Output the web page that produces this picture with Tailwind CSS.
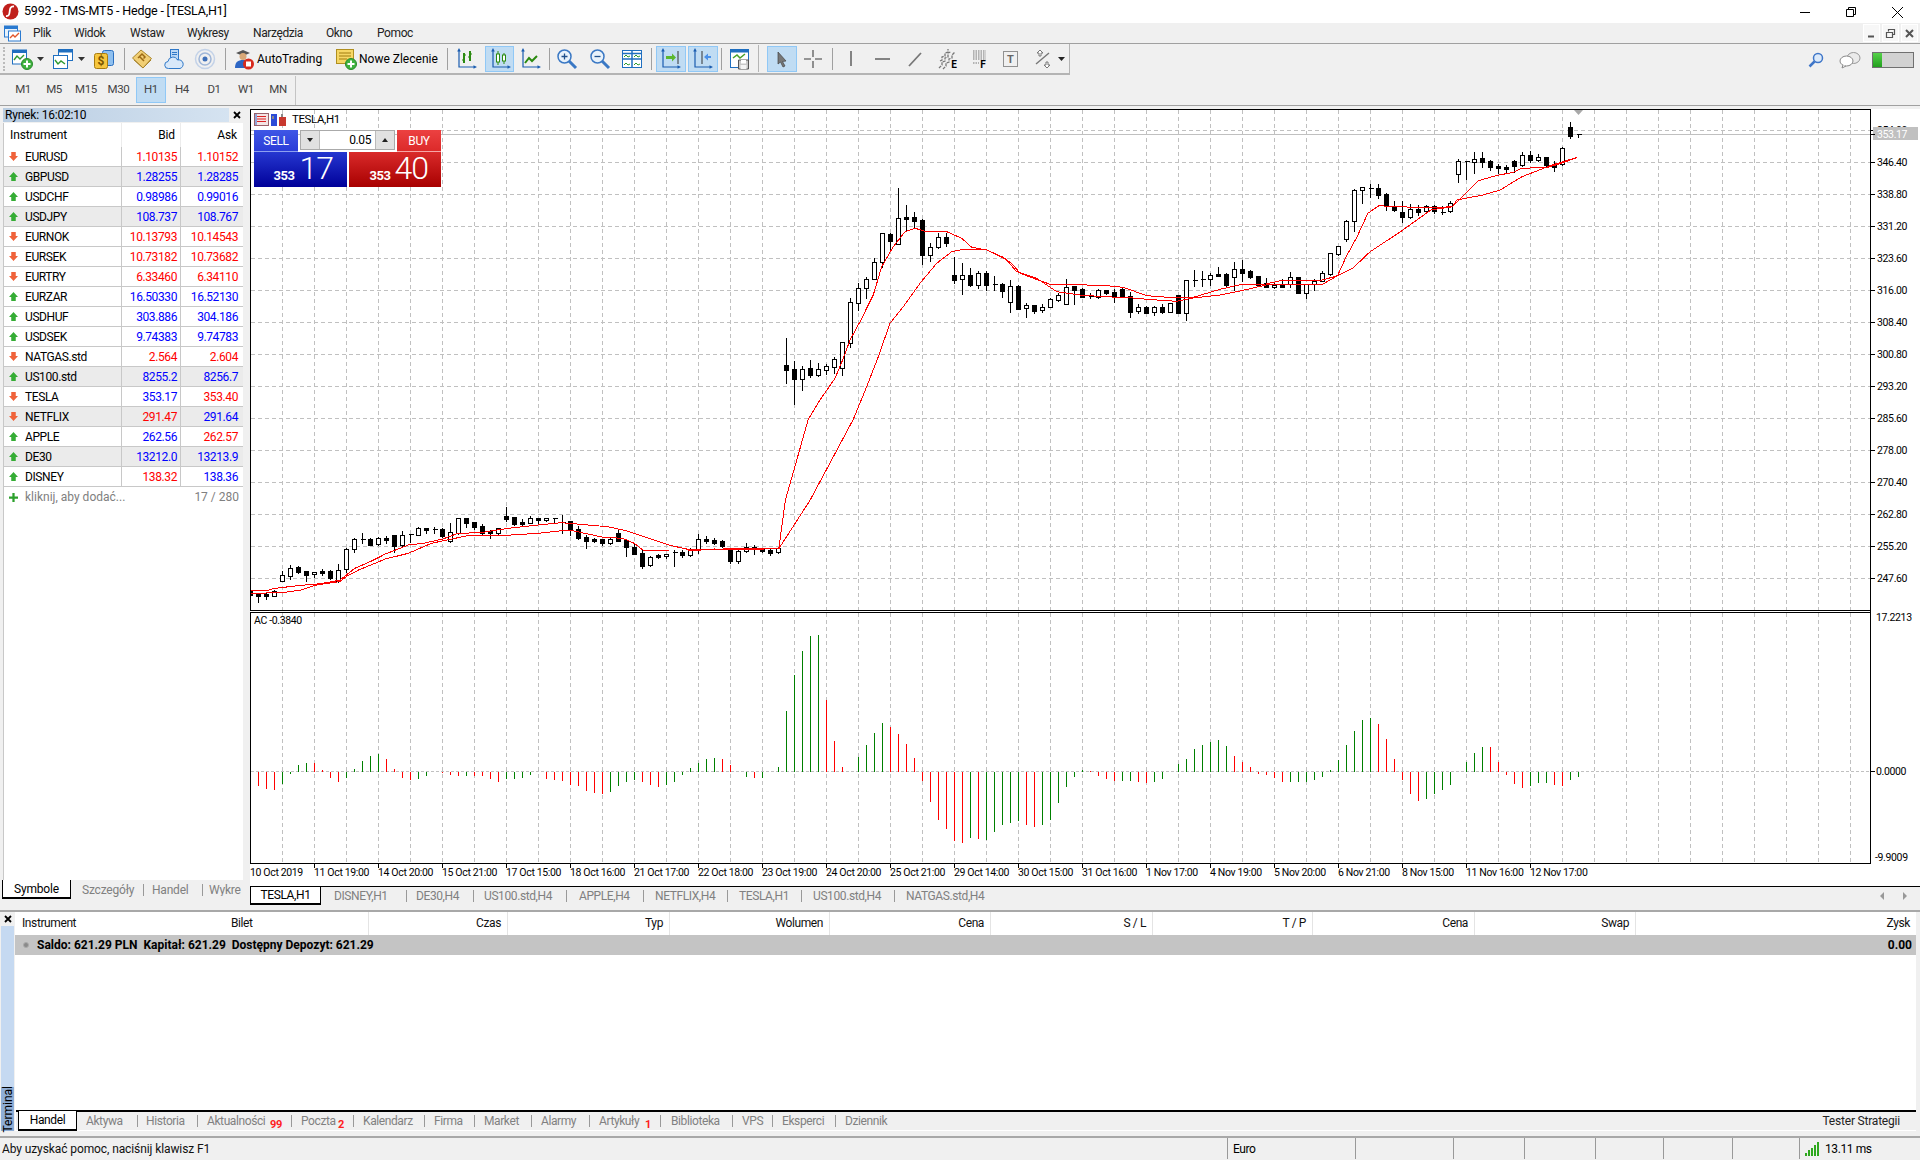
<!DOCTYPE html>
<html lang="pl">
<head>
    <meta charset="UTF-8">
    <title>5992 - TMS-MT5 - Hedge - [TESLA,H1]</title>
    <script src="https://cdn.jsdelivr.net/npm/@tailwindcss/browser@4"></script>
</head>
<body class="w-[1920px] h-[1160px] overflow-hidden bg-[#f0f0f0] text-black text-[11.5px] leading-none tracking-[-0.4px] font-['Roboto',sans-serif]">

    <svg class="hidden">
        <symbol id="up" viewBox="0 0 8 8"><path d="M4 0l4 4.500H6V8H2V4.500H0z" fill="#35ad35"/></symbol>
        <symbol id="down" viewBox="0 0 8 8"><path d="M2 0h4v3.500h2L4 8 0 3.500h2z" fill="#f0623a"/></symbol>
        <symbol id="axes" viewBox="0 0 22 22"><path d="M4 3v16h15" fill="none" stroke="#1a5cb0" stroke-width="1.200"/><path d="M4 0l-1.800 3.500h3.600zM22 19l-3.500-1.800v3.600z" fill="#1a5cb0"/></symbol>
        <symbol id="plus" viewBox="0 0 22 22"><circle cx="16" cy="16" r="5.500" fill="#3eb23e" stroke="#2a8a2a"/><path d="M16 12.500v7M12.500 16h7" stroke="#fff" stroke-width="2"/></symbol>
    </svg>

    <!-- pasek tytulu -->
    <div class="h-[23px] bg-white flex items-center">
        <svg class="ml-[2px] w-[17px] h-[17px]" viewBox="0 0 17 17"><circle cx="8.500" cy="8.500" r="8" fill="#c0201c"/><path d="M12 3.500C8 3 8 6 7.700 8.500S7 13.500 4 13" fill="none" stroke="#fff" stroke-width="1.800"/></svg>
        <span class="ml-[5px] text-[12.5px] tracking-[-0.2px]">5992 - TMS-MT5 - Hedge - [TESLA,H1]</span>
        <div class="ml-auto flex items-center">
            <svg class="w-[46px] h-[20px]" viewBox="0 0 46 20"><path d="M18 10.500h10" stroke="#000"/></svg>
            <svg class="w-[46px] h-[20px]" viewBox="0 0 46 20"><path d="M18.500 7.500h7v7h-7zM20.500 7.500v-2h7v7h-2" fill="none" stroke="#000"/></svg>
            <svg class="w-[46px] h-[20px]" viewBox="0 0 46 20"><path d="M18 5l11 11M29 5L18 16" stroke="#000"/></svg>
        </div>
    </div>

    <!-- menu -->
    <div class="h-[21px] border-b border-[#a0a0a0] flex items-center text-[12px] text-[#222] relative">
        <svg class="ml-[4px] w-[17px] h-[17px]" viewBox="0 0 17 17"><rect x="0.500" y="1" width="13" height="11" fill="#e8f2fb" stroke="#2a7ad0"/><rect x="0.500" y="1" width="13" height="3" fill="#2a7ad0"/><rect x="4.500" y="6" width="12" height="10" fill="#fff" stroke="#2a7ad0"/><path d="M6 13l3-3 2 2 4-4" fill="none" stroke="#e0552a" stroke-width="1.300"/></svg>
        <span class="ml-[12px] w-[41px]">Plik</span>
        <span class="w-[56px]">Widok</span>
        <span class="w-[57px]">Wstaw</span>
        <span class="w-[66px]">Wykresy</span>
        <span class="w-[73px]">Narzędzia</span>
        <span class="w-[51px]">Okno</span>
        <span>Pomoc</span>
        <div class="ml-auto mr-[2px] flex gap-[2px] items-center">
            <div class="w-[17px] h-[18px] bg-[#f7f7f7] border border-white flex items-center justify-center"><svg class="w-[11px] h-[11px]" viewBox="0 0 11 11"><path d="M2 8.500h6" stroke="#555" stroke-width="2"/></svg></div>
            <div class="w-[17px] h-[18px] bg-[#f7f7f7] border border-white flex items-center justify-center"><svg class="w-[11px] h-[11px]" viewBox="0 0 11 11"><path d="M1.500 4.500h6v5h-6zM3.500 3.500v-2h6v5h-2" fill="none" stroke="#555" stroke-width="1.200"/></svg></div>
            <div class="w-[17px] h-[18px] bg-[#f7f7f7] border border-white flex items-center justify-center"><svg class="w-[11px] h-[11px]" viewBox="0 0 11 11"><path d="M2 2l7 7M9 2L2 9" stroke="#555" stroke-width="2"/></svg></div>
        </div>
    </div>

    <!-- pasek narzedzi -->
    <div class="h-[31px] flex items-center relative">
        <div class="w-[1070px] h-[31px] border-b-2 border-r border-[#b4b4b4] flex items-center pl-[3px] text-[12px] tracking-normal">
            <div class="w-[2px] h-[24px] border-l-2 border-dotted border-[#bbb]"></div>
            <svg class="ml-[6px] w-[22px] h-[22px]" viewBox="0 0 22 22"><rect x="1.500" y="2" width="14" height="14" fill="#fff" stroke="#1f6fc0"/><rect x="1.500" y="2" width="14" height="3" fill="#1f6fc0"/><path d="M3 12l3-4 3 3 4-4" fill="none" stroke="#2f9a2f" stroke-width="1.400"/><use href="#plus"/></svg>
            <svg class="ml-[4px] w-[7px] h-[4px]" viewBox="0 0 7 4"><path d="M0 0h7L3.500 4z" fill="#333"/></svg>
            <svg class="ml-[8px] w-[22px] h-[22px]" viewBox="0 0 22 22"><rect x="6.500" y="1.500" width="14" height="11" fill="#fff" stroke="#1f6fc0"/><rect x="6.500" y="1.500" width="14" height="3" fill="#1f6fc0"/><rect x="1.500" y="7.500" width="14" height="13" fill="#fff" stroke="#1f6fc0"/><path d="M3 12l3 4 3-3 4 3" fill="none" stroke="#2f9a2f" stroke-width="1.400"/></svg>
            <svg class="ml-[4px] w-[7px] h-[4px]" viewBox="0 0 7 4"><path d="M0 0h7L3.500 4z" fill="#333"/></svg>
            <svg class="ml-[8px] w-[22px] h-[22px]" viewBox="0 0 22 22"><rect x="9.500" y="2.500" width="11" height="15" rx="2" fill="#8fc0ef" stroke="#2a6fc0"/><rect x="1.500" y="5.500" width="13" height="15" rx="2" fill="#f6c63e" stroke="#a87c10"/><text x="8" y="17" font-size="12" font-weight="700" text-anchor="middle" fill="#7a5500">$</text></svg>
            <div class="ml-[9px] w-px h-[22px] bg-[#a0a0a0]"></div>
            <svg class="ml-[6px] w-[22px] h-[22px]" viewBox="0 0 22 22"><path d="M1.500 10L10 2l10.500 8.500L12 20z" fill="#f1cf75" stroke="#a9852b"/><path d="M3 12l9 8 8-8" fill="none" stroke="#a9852b"/><path d="M7 10l4-4 3 3-1.500 1.500M8 8l5 5" fill="none" stroke="#9c6a14" stroke-width="1.500"/></svg>
            <svg class="ml-[10px] w-[22px] h-[22px]" viewBox="0 0 22 22"><rect x="7.500" y="1.500" width="8" height="10" fill="#bcd8f5" stroke="#2f78c8"/><path d="M9 4.500h5M9 6.500h5" stroke="#2f78c8"/><path d="M5.500 20.500a3.500 3.500 0 0 1-.5-7 5 5 0 0 1 9.500-1.500 4.300 4.300 0 0 1 2.500 8.500z" fill="#d8e8f9" stroke="#2f78c8"/></svg>
            <svg class="ml-[9px] w-[22px] h-[22px]" viewBox="0 0 22 22" fill="none"><circle cx="11" cy="11" r="9.500" stroke="#c3d2e8" stroke-width="1.500"/><circle cx="11" cy="11" r="6" stroke="#9fb6d8" stroke-width="1.500"/><circle cx="11" cy="11" r="2.500" fill="#3e6fb8"/></svg>
            <div class="ml-[9px] w-px h-[22px] bg-[#a0a0a0]"></div>
            <svg class="ml-[7px] w-[22px] h-[22px]" viewBox="0 0 22 22"><path d="M3 5l7-3 7 3-7 3z" fill="#555"/><circle cx="10" cy="8.500" r="3.500" fill="#d9a877"/><path d="M2 20c0-6 3-8 8-8s8 2 8 8z" fill="#2d66c4"/><circle cx="15.500" cy="16" r="5.500" fill="#d72a1e"/><rect x="13" y="13.500" width="5" height="5" fill="#fff"/></svg>
            <span class="ml-[2px] w-[65px] whitespace-nowrap">AutoTrading</span>
            <svg class="ml-[13px] w-[22px] h-[22px]" viewBox="0 0 22 22"><rect x="1.500" y="1.500" width="17" height="14" fill="#f6d765" stroke="#b08f20"/><path d="M4 5h12M4 8h12M4 11h8" stroke="#a07c10"/><use href="#plus"/></svg>
            <span class="ml-[2px] w-[78px] whitespace-nowrap">Nowe Zlecenie</span>
            <div class="ml-[10px] w-px h-[22px] bg-[#a0a0a0]"></div>
            <svg class="ml-[7px] w-[22px] h-[22px]" viewBox="0 0 22 22"><use href="#axes"/><path d="M9 5v10M7.500 12H9M9 7h1.500M15 3v10M13.500 9H15M15 6h1.500" stroke="#2a8a10" stroke-width="2" fill="none"/></svg>
            <div class="ml-[8px] w-[29px] h-[26px] bg-[#c0dcf3] border border-[#90c8f6] flex items-center justify-center"><svg class="w-[22px] h-[22px]" viewBox="0 0 22 22"><use href="#axes"/><path d="M9 3v14M15 5v11" stroke="#2a8a10"/><rect x="7.500" y="6" width="3" height="8" fill="#fff" stroke="#2a8a10"/><rect x="13.500" y="7" width="3" height="6" fill="#fff" stroke="#2a8a10"/></svg></div>
            <svg class="ml-[5px] w-[22px] h-[22px]" viewBox="0 0 22 22"><use href="#axes"/><path d="M6 15l4-5 3 3 5-5" fill="none" stroke="#2a8a10" stroke-width="2"/></svg>
            <div class="ml-[8px] w-px h-[22px] bg-[#a0a0a0]"></div>
            <svg class="ml-[6px] w-[22px] h-[22px]" viewBox="0 0 22 22"><circle cx="8.500" cy="8.500" r="6.500" fill="#e8f2fb" stroke="#3a78c4" stroke-width="1.500"/><path d="M13 13l7 7" stroke="#3a78c4" stroke-width="3"/><path d="M5.500 8.500h6M8.500 5.500v6" stroke="#20508c" stroke-width="1.300"/></svg>
            <svg class="ml-[11px] w-[22px] h-[22px]" viewBox="0 0 22 22"><circle cx="8.500" cy="8.500" r="6.500" fill="#e8f2fb" stroke="#3a78c4" stroke-width="1.500"/><path d="M13 13l7 7" stroke="#3a78c4" stroke-width="3"/><path d="M5.500 8.500h6" stroke="#20508c" stroke-width="1.300"/></svg>
            <svg class="ml-[10px] w-[22px] h-[22px]" viewBox="0 0 22 22"><rect x="1.500" y="2.500" width="19" height="17" fill="#fff" stroke="#1f6fc0"/><path d="M1.500 5.500h19M1.500 11h19M11 2.500v17" stroke="#1f6fc0" stroke-width="1.500"/><path d="M3 9l2-2 2 2 2-1M13 9l2-2 2 2 2-1M3 17l2-2 2 2 2-1M13 17l2-2 2 2 2-1" fill="none" stroke="#2f9a2f"/></svg>
            <div class="ml-[8px] w-px h-[22px] bg-[#a0a0a0]"></div>
            <div class="ml-[4px] w-[30px] h-[26px] bg-[#c0dcf3] border border-[#90c8f6] flex items-center justify-center"><svg class="w-[24px] h-[22px]" viewBox="0 0 24 22"><use href="#axes" width="22" height="22"/><path d="M7 8h6V5.500l4 4-4 4V11H7z" fill="#5cb82e"/><path d="M19 3v13" stroke="#333"/></svg></div>
            <div class="ml-[2px] w-[30px] h-[26px] bg-[#c0dcf3] border border-[#90c8f6] flex items-center justify-center"><svg class="w-[24px] h-[22px]" viewBox="0 0 24 22"><use href="#axes" width="22" height="22"/><path d="M20 8h-3V5.500l-4 3.500 4 3.500V10h3z" fill="#4a8fe8"/><path d="M11 3v13" stroke="#333"/></svg></div>
            <div class="ml-[3px] w-px h-[22px] bg-[#a0a0a0]"></div>
            <svg class="ml-[7px] w-[22px] h-[22px]" viewBox="0 0 22 22"><rect x="1.500" y="1.500" width="18" height="18" fill="#fff" stroke="#1f6fc0"/><rect x="1.500" y="1.500" width="18" height="3" fill="#1f6fc0"/><path d="M4 10l4-3 3 3 5-4" fill="none" stroke="#48a028" stroke-width="1.500"/><path d="M9.500 12h10v9h-10z" fill="#c9c9c9" stroke="#555"/><rect x="12" y="12" width="5" height="3.500" fill="#fff"/><rect x="11.500" y="17" width="6" height="4" fill="#f4f4f4"/></svg>
            <div class="ml-[7px] w-px h-[27px] bg-[#b4b4b4]"></div>
            <div class="ml-[8px] w-[30px] h-[26px] bg-[#c0dcf3] border border-[#90c8f6] flex items-center justify-center"><svg class="w-[14px] h-[18px]" viewBox="0 0 14 18"><path d="M3 2l8 9-3.500.5L10 16l-2 1-2.500-5L3 14z" fill="#777" stroke="#444" stroke-width=".7"/></svg></div>
            <svg class="ml-[5px] w-[22px] h-[22px]" viewBox="0 0 22 22"><path d="M11 2v7M11 13v7M2 11h7M13 11h7" stroke="#777" stroke-width="1.600"/></svg>
            <div class="ml-[8px] w-px h-[22px] bg-[#a0a0a0]"></div>
            <svg class="ml-[7px] w-[22px] h-[22px]" viewBox="0 0 22 22"><path d="M11 3v15" stroke="#777" stroke-width="1.800"/></svg>
            <svg class="ml-[10px] w-[22px] h-[22px]" viewBox="0 0 22 22"><path d="M3 11h15" stroke="#777" stroke-width="1.800"/></svg>
            <svg class="ml-[10px] w-[22px] h-[22px]" viewBox="0 0 22 22"><path d="M5 18L17 5" stroke="#777" stroke-width="1.800"/></svg>
            <svg class="ml-[11px] w-[22px] h-[22px]" viewBox="0 0 22 22"><path d="M3 13l2-1v-3l3-1V5l3-1V1M2 20l3-3v-3l3-1v-3l3-1V5l3-1M6 21l3-3v-3l3-1v-3l3-1V7l3-3" fill="none" stroke="#777" stroke-width="1.300" stroke-dasharray="3 1"/><text x="17" y="20" font-size="10" font-weight="700" text-anchor="middle" fill="#000">E</text></svg>
            <svg class="ml-[9px] w-[22px] h-[22px]" viewBox="0 0 22 22"><path d="M5 3h13M5 5h13M5 7h13M5 9h13M5 11h13M5 15h6" stroke="#777" stroke-dasharray="1.500 1"/><text x="15" y="20" font-size="10" font-weight="700" text-anchor="middle" fill="#000">F</text></svg>
            <svg class="ml-[10px] w-[22px] h-[22px]" viewBox="0 0 22 22"><rect x="3.500" y="3.500" width="14" height="15" fill="none" stroke="#333" stroke-dasharray="1 1"/><text x="10.500" y="15" font-size="11" font-weight="700" text-anchor="middle" fill="#666">T</text></svg>
            <svg class="ml-[10px] w-[22px] h-[22px]" viewBox="0 0 22 22"><path d="M8 2l3 3H9v3H7V5H5zM15 20l3-3h-2v-3h-2v3h-2z" fill="#fff" stroke="#777"/><path d="M4 16L17 5" stroke="#777" stroke-width="1.400"/></svg>
            <svg class="ml-[4px] w-[7px] h-[4px]" viewBox="0 0 7 4"><path d="M0 0h7L3.500 4z" fill="#222"/></svg>
        </div>
        <div class="ml-auto flex items-center mr-[6px]">
            <svg class="w-[16px] h-[16px]" viewBox="0 0 16 16"><circle cx="10" cy="6" r="4.500" fill="#dceafa" stroke="#3f76c8" stroke-width="1.500"/><path d="M6.500 9.500l-5 5" stroke="#3f76c8" stroke-width="2.500"/></svg>
            <svg class="ml-[15px] w-[22px] h-[18px]" viewBox="0 0 22 18"><ellipse cx="14.500" cy="7" rx="6.500" ry="5.500" fill="#eaeaea" stroke="#999"/><ellipse cx="7.500" cy="10" rx="6.500" ry="5" fill="#fff" stroke="#888"/><path d="M4 14l-1 3 4-2" fill="#fff" stroke="#888"/></svg>
            <div class="ml-[11px] w-[42px] h-[16px] bg-[#d2d2d2] border border-[#707070] flex"><div class="w-[9px] bg-[linear-gradient(#56d24a,#22a01e)]"></div></div>
        </div>
    </div>

    <!-- okresy -->
    <div class="h-[31px] border-b border-[#a0a0a0] flex items-center pl-[8px] text-[#444]">
        <div class="w-[30px] text-center">M1</div>
        <div class="w-[32px] text-center">M5</div>
        <div class="w-[32px] text-center">M15</div>
        <div class="w-[33px] text-center">M30</div>
        <div class="ml-px w-[30px] h-[26px] bg-[#c0dcf3] border border-[#90c8f6] flex items-center justify-center">H1</div>
        <div class="w-[32px] text-center">H4</div>
        <div class="w-[32px] text-center">D1</div>
        <div class="w-[32px] text-center">W1</div>
        <div class="w-[32px] text-center">MN</div>
        <div class="ml-[1px] w-px h-[29px] bg-[#c4c4c4]"></div>
    </div>

    <div class="h-[2px]"></div>

    <div class="h-[797px] flex">
        <!-- Rynek -->
        <div class="w-[250px] pl-[3px] pr-[7px] flex flex-col text-[12px]">
            <div class="h-[14px] w-[226px] bg-[linear-gradient(90deg,#b9cde2,#d5e3f1)] flex items-center pl-[2px] text-[12px] tracking-[-0.2px] relative">
                <span>Rynek: 16:02:10</span>
                <svg class="absolute -right-[12px] top-[3px] w-[8px] h-[8px]" viewBox="0 0 8 8"><path d="M1 1l6 6M7 1L1 7" stroke="#000" stroke-width="1.800"/></svg>
            </div>
            <div class="mt-px h-[757px] w-[240px] bg-white border-l border-[#c8c8c8]">
                <div class="grid grid-cols-[118px_59px_61px] h-[24px] items-center tracking-[-0.1px]">
                    <div class="pl-[6px] h-full flex items-center border-r border-[#ececec]">Instrument</div>
                    <div class="pr-[5px] h-full flex items-center justify-end border-r border-[#ececec]">Bid</div>
                    <div class="pr-[5px] h-full flex items-center justify-end">Ask</div>
                </div>
                <div class="grid grid-cols-[118px_59px_61px] h-[20px] items-center border-b border-[#c8c8c8]"><div class="flex items-center pl-[5px] h-full border-r border-[#c8c8c8]"><svg class="w-[9px] h-[9px]"><use href="#down"/></svg><span class="ml-[7px]">EURUSD</span></div><div class="text-right pr-[3px] text-[#ff0000] h-full flex items-center justify-end border-r border-[#c8c8c8]">1.10135</div><div class="text-right pr-[4px] text-[#ff0000]">1.10152</div></div>
                <div class="grid grid-cols-[118px_59px_61px] h-[20px] items-center border-b border-[#c8c8c8] bg-[#ebebeb]"><div class="flex items-center pl-[5px] h-full border-r border-[#c8c8c8]"><svg class="w-[9px] h-[9px]"><use href="#up"/></svg><span class="ml-[7px]">GBPUSD</span></div><div class="text-right pr-[3px] text-[#0000ff] h-full flex items-center justify-end border-r border-[#c8c8c8]">1.28255</div><div class="text-right pr-[4px] text-[#0000ff]">1.28285</div></div>
                <div class="grid grid-cols-[118px_59px_61px] h-[20px] items-center border-b border-[#c8c8c8]"><div class="flex items-center pl-[5px] h-full border-r border-[#c8c8c8]"><svg class="w-[9px] h-[9px]"><use href="#up"/></svg><span class="ml-[7px]">USDCHF</span></div><div class="text-right pr-[3px] text-[#0000ff] h-full flex items-center justify-end border-r border-[#c8c8c8]">0.98986</div><div class="text-right pr-[4px] text-[#0000ff]">0.99016</div></div>
                <div class="grid grid-cols-[118px_59px_61px] h-[20px] items-center border-b border-[#c8c8c8] bg-[#ebebeb]"><div class="flex items-center pl-[5px] h-full border-r border-[#c8c8c8]"><svg class="w-[9px] h-[9px]"><use href="#up"/></svg><span class="ml-[7px]">USDJPY</span></div><div class="text-right pr-[3px] text-[#0000ff] h-full flex items-center justify-end border-r border-[#c8c8c8]">108.737</div><div class="text-right pr-[4px] text-[#0000ff]">108.767</div></div>
                <div class="grid grid-cols-[118px_59px_61px] h-[20px] items-center border-b border-[#c8c8c8]"><div class="flex items-center pl-[5px] h-full border-r border-[#c8c8c8]"><svg class="w-[9px] h-[9px]"><use href="#down"/></svg><span class="ml-[7px]">EURNOK</span></div><div class="text-right pr-[3px] text-[#ff0000] h-full flex items-center justify-end border-r border-[#c8c8c8]">10.13793</div><div class="text-right pr-[4px] text-[#ff0000]">10.14543</div></div>
                <div class="grid grid-cols-[118px_59px_61px] h-[20px] items-center border-b border-[#c8c8c8]"><div class="flex items-center pl-[5px] h-full border-r border-[#c8c8c8]"><svg class="w-[9px] h-[9px]"><use href="#down"/></svg><span class="ml-[7px]">EURSEK</span></div><div class="text-right pr-[3px] text-[#ff0000] h-full flex items-center justify-end border-r border-[#c8c8c8]">10.73182</div><div class="text-right pr-[4px] text-[#ff0000]">10.73682</div></div>
                <div class="grid grid-cols-[118px_59px_61px] h-[20px] items-center border-b border-[#c8c8c8]"><div class="flex items-center pl-[5px] h-full border-r border-[#c8c8c8]"><svg class="w-[9px] h-[9px]"><use href="#down"/></svg><span class="ml-[7px]">EURTRY</span></div><div class="text-right pr-[3px] text-[#ff0000] h-full flex items-center justify-end border-r border-[#c8c8c8]">6.33460</div><div class="text-right pr-[4px] text-[#ff0000]">6.34110</div></div>
                <div class="grid grid-cols-[118px_59px_61px] h-[20px] items-center border-b border-[#c8c8c8]"><div class="flex items-center pl-[5px] h-full border-r border-[#c8c8c8]"><svg class="w-[9px] h-[9px]"><use href="#up"/></svg><span class="ml-[7px]">EURZAR</span></div><div class="text-right pr-[3px] text-[#0000ff] h-full flex items-center justify-end border-r border-[#c8c8c8]">16.50330</div><div class="text-right pr-[4px] text-[#0000ff]">16.52130</div></div>
                <div class="grid grid-cols-[118px_59px_61px] h-[20px] items-center border-b border-[#c8c8c8]"><div class="flex items-center pl-[5px] h-full border-r border-[#c8c8c8]"><svg class="w-[9px] h-[9px]"><use href="#up"/></svg><span class="ml-[7px]">USDHUF</span></div><div class="text-right pr-[3px] text-[#0000ff] h-full flex items-center justify-end border-r border-[#c8c8c8]">303.886</div><div class="text-right pr-[4px] text-[#0000ff]">304.186</div></div>
                <div class="grid grid-cols-[118px_59px_61px] h-[20px] items-center border-b border-[#c8c8c8]"><div class="flex items-center pl-[5px] h-full border-r border-[#c8c8c8]"><svg class="w-[9px] h-[9px]"><use href="#up"/></svg><span class="ml-[7px]">USDSEK</span></div><div class="text-right pr-[3px] text-[#0000ff] h-full flex items-center justify-end border-r border-[#c8c8c8]">9.74383</div><div class="text-right pr-[4px] text-[#0000ff]">9.74783</div></div>
                <div class="grid grid-cols-[118px_59px_61px] h-[20px] items-center border-b border-[#c8c8c8]"><div class="flex items-center pl-[5px] h-full border-r border-[#c8c8c8]"><svg class="w-[9px] h-[9px]"><use href="#down"/></svg><span class="ml-[7px]">NATGAS.std</span></div><div class="text-right pr-[3px] text-[#ff0000] h-full flex items-center justify-end border-r border-[#c8c8c8]">2.564</div><div class="text-right pr-[4px] text-[#ff0000]">2.604</div></div>
                <div class="grid grid-cols-[118px_59px_61px] h-[20px] items-center border-b border-[#c8c8c8] bg-[#ebebeb]"><div class="flex items-center pl-[5px] h-full border-r border-[#c8c8c8]"><svg class="w-[9px] h-[9px]"><use href="#up"/></svg><span class="ml-[7px]">US100.std</span></div><div class="text-right pr-[3px] text-[#0000ff] h-full flex items-center justify-end border-r border-[#c8c8c8]">8255.2</div><div class="text-right pr-[4px] text-[#0000ff]">8256.7</div></div>
                <div class="grid grid-cols-[118px_59px_61px] h-[20px] items-center border-b border-[#c8c8c8]"><div class="flex items-center pl-[5px] h-full border-r border-[#c8c8c8]"><svg class="w-[9px] h-[9px]"><use href="#down"/></svg><span class="ml-[7px]">TESLA</span></div><div class="text-right pr-[3px] text-[#0000ff] h-full flex items-center justify-end border-r border-[#c8c8c8]">353.17</div><div class="text-right pr-[4px] text-[#ff0000]">353.40</div></div>
                <div class="grid grid-cols-[118px_59px_61px] h-[20px] items-center border-b border-[#c8c8c8] bg-[#ebebeb]"><div class="flex items-center pl-[5px] h-full border-r border-[#c8c8c8]"><svg class="w-[9px] h-[9px]"><use href="#down"/></svg><span class="ml-[7px]">NETFLIX</span></div><div class="text-right pr-[3px] text-[#ff0000] h-full flex items-center justify-end border-r border-[#c8c8c8]">291.47</div><div class="text-right pr-[4px] text-[#0000ff]">291.64</div></div>
                <div class="grid grid-cols-[118px_59px_61px] h-[20px] items-center border-b border-[#c8c8c8]"><div class="flex items-center pl-[5px] h-full border-r border-[#c8c8c8]"><svg class="w-[9px] h-[9px]"><use href="#up"/></svg><span class="ml-[7px]">APPLE</span></div><div class="text-right pr-[3px] text-[#0000ff] h-full flex items-center justify-end border-r border-[#c8c8c8]">262.56</div><div class="text-right pr-[4px] text-[#ff0000]">262.57</div></div>
                <div class="grid grid-cols-[118px_59px_61px] h-[20px] items-center border-b border-[#c8c8c8] bg-[#ebebeb]"><div class="flex items-center pl-[5px] h-full border-r border-[#c8c8c8]"><svg class="w-[9px] h-[9px]"><use href="#up"/></svg><span class="ml-[7px]">DE30</span></div><div class="text-right pr-[3px] text-[#0000ff] h-full flex items-center justify-end border-r border-[#c8c8c8]">13212.0</div><div class="text-right pr-[4px] text-[#0000ff]">13213.9</div></div>
                <div class="grid grid-cols-[118px_59px_61px] h-[20px] items-center border-b border-[#c8c8c8]"><div class="flex items-center pl-[5px] h-full border-r border-[#c8c8c8]"><svg class="w-[9px] h-[9px]"><use href="#up"/></svg><span class="ml-[7px]">DISNEY</span></div><div class="text-right pr-[3px] text-[#ff0000] h-full flex items-center justify-end border-r border-[#c8c8c8]">138.32</div><div class="text-right pr-[4px] text-[#0000ff]">138.36</div></div>
                <div class="flex items-center h-[20px] pl-[5px] pr-[4px] text-[#808080] tracking-normal"><svg class="w-[9px] h-[9px]" viewBox="0 0 8 8"><path d="M4 0v8M0 4h8" stroke="#2ca02c" stroke-width="2"/></svg><span class="ml-[7px]">kliknij, aby dodać...</span><span class="ml-auto">17 / 280</span></div>
            </div>
            <div class="h-[19px] flex items-center text-[#808080] -ml-px tracking-[-0.2px]">
                <div class="w-[69px] h-[19px] bg-white border-x border-b-2 border-black text-black flex items-center justify-center">Symbole</div>
                <span class="ml-[11px] w-[62px]">Szczegóły</span>
                <div class="w-px h-[12px] bg-[#999] -ml-[1px] mr-[8px]"></div>
                <span class="w-[50px]">Handel</span>
                <div class="w-px h-[12px] bg-[#999] mr-[6px]"></div>
                <span class="w-[32px] overflow-hidden whitespace-nowrap">Wykresy</span>
            </div>
        </div>

        <!-- wykres -->
        <div class="w-[1670px] flex flex-col">
            <div class="relative h-[778px] bg-white">
                <svg id="chart" class="block w-[1670px] h-[778px]" viewBox="250 108 1670 778" shape-rendering="crispEdges"></svg>
                <div class="absolute left-[4px] top-[5px] flex items-center">
                    <svg class="w-[15px] h-[13px]" viewBox="0 0 15 13"><rect x=".5" y=".5" width="14" height="12" fill="#f3e4e4" stroke="#99616a"/><path d="M3 3.500h9M3 6h9M3 8.500h9" stroke="#d22"/><path d="M2 1v11" stroke="#36c"/></svg>
                    <svg class="ml-[2px] w-[15px] h-[13px]" viewBox="0 0 15 13"><path d="M0 1h6v12H0z" fill="#2b4bd8"/><path d="M8 4h7v9H8z" fill="#c8382f"/><path d="M2 3v3M11 1v3" stroke="#888" stroke-width="2"/></svg>
                    <span class="ml-[6px] text-[11.5px]">TESLA,H1</span>
                </div>
                <!-- panel zlecen -->
                <div class="absolute left-[4px] top-[22px] w-[187px] h-[57px] text-white">
                    <div class="flex h-[22px] items-start">
                        <div class="w-[44px] h-[22px] bg-[linear-gradient(#3f57e6,#2a3cd8)] flex items-center justify-center text-[12px] border-b border-[#8da0f0]">SELL</div>
                        <div class="ml-[2px] w-[95px] h-[20px] border border-[#aaa] bg-white flex text-black">
                            <div class="w-[19px] bg-[#e1e1e1] border-r border-[#bbb] flex items-center justify-center"><svg class="w-[6px] h-[4px]" viewBox="0 0 6 4"><path d="M0 0h6L3 4z" fill="#222"/></svg></div>
                            <div class="flex-1 flex items-center justify-end pr-[4px] text-[12px]">0.05</div>
                            <div class="w-[19px] bg-[#e1e1e1] border-l border-[#bbb] flex items-center justify-center"><svg class="w-[6px] h-[4px]" viewBox="0 0 6 4"><path d="M3 0l3 4H0z" fill="#222"/></svg></div>
                        </div>
                        <div class="ml-[2px] w-[44px] h-[22px] bg-[linear-gradient(#ec4141,#dc2a2a)] flex items-center justify-center text-[12px] border-b border-[#f6a6a6]">BUY</div>
                    </div>
                    <div class="flex h-[35px]">
                        <div class="w-[93px] bg-[linear-gradient(#2537d0,#000099)] flex items-end justify-end pr-[14px] pb-[3px]">
                            <span class="text-[13px] font-bold mr-[5px] mb-[2px] tracking-[-0.5px]">353</span>
                            <span class="text-[32px] font-light tracking-[-1px]">17</span>
                        </div>
                        <div class="ml-[2px] w-[92px] bg-[linear-gradient(#d92a2a,#a80000)] flex items-end justify-end pr-[13px] pb-[3px]">
                            <span class="text-[13px] font-bold mr-[4px] mb-[2px] tracking-[-0.5px]">353</span>
                            <span class="text-[32px] font-light tracking-[-1px]">40</span>
                        </div>
                    </div>
                </div>
            </div>
            <!-- zakladki wykresow -->
            <div class="h-[19px] border-t border-black flex items-center text-[#808080] text-[12px] relative">
                <div class="w-[71px] h-[18px] bg-white border-x border-b-2 border-black text-black flex items-center justify-center">TESLA,H1</div>
                <span class="ml-[13px] w-[72px]">DISNEY,H1</span>
                <div class="w-px h-[12px] bg-[#999] mr-[9px]"></div>
                <span class="w-[57px]">DE30,H4</span>
                <div class="w-px h-[12px] bg-[#999] mr-[10px]"></div>
                <span class="w-[82px]">US100.std,H4</span>
                <div class="w-px h-[12px] bg-[#999] mr-[12px]"></div>
                <span class="w-[64px]">APPLE,H4</span>
                <div class="w-px h-[12px] bg-[#999] mr-[11px]"></div>
                <span class="w-[72px]">NETFLIX,H4</span>
                <div class="w-px h-[12px] bg-[#999] mr-[11px]"></div>
                <span class="w-[62px]">TESLA,H1</span>
                <div class="w-px h-[12px] bg-[#999] mr-[11px]"></div>
                <span class="w-[81px]">US100.std,H4</span>
                <div class="w-px h-[12px] bg-[#999] mr-[11px]"></div>
                <span>NATGAS.std,H4</span>
                <svg class="absolute left-[1630px] top-[5px] w-[4px] h-[8px]" viewBox="0 0 4 8"><path d="M4 0v8L0 4z" fill="#999"/></svg>
                <svg class="absolute left-[1653px] top-[5px] w-[4px] h-[8px]" viewBox="0 0 4 8"><path d="M0 0v8l4-4z" fill="#999"/></svg>
            </div>
        </div>
    </div>

    <div class="h-[5px]"></div>

    <!-- terminal -->
    <div class="h-[221px] flex text-[12px] border-t-2 border-[#a8a8a8]">
        <div class="w-[15px] flex flex-col">
            <div class="h-[14px] flex items-center justify-center"><svg class="w-[8px] h-[8px]" viewBox="0 0 8 8"><path d="M1 1l6 6M7 1L1 7" stroke="#000" stroke-width="1.800"/></svg></div>
            <div class="ml-px w-[13px] flex-1 bg-[#c5d9f1] flex flex-col justify-end">
                <div class="bg-[#8faed6] h-[44px] flex items-center justify-center"><span class="[writing-mode:vertical-rl] rotate-180 text-[12px] tracking-normal">Terminal</span></div>
            </div>
        </div>
        <div class="w-[1901px] flex flex-col bg-white">
            <div class="grid grid-cols-[210px_144px_139px_162px_160px_161px_162px_160px_162px_161px_280px] h-[23px] items-center text-[#111]">
                <div class="pl-[7px] pb-[2px] h-full flex items-center">Instrument</div>
                <div class="pl-[6px] pb-[2px] h-full flex items-center border-r border-[#e4e4e4]">Bilet</div>
                <div class="pr-[6px] pb-[2px] h-full flex items-center justify-end border-r border-[#e4e4e4]">Czas</div>
                <div class="pr-[6px] pb-[2px] h-full flex items-center justify-end border-r border-[#e4e4e4]">Typ</div>
                <div class="pr-[6px] pb-[2px] h-full flex items-center justify-end border-r border-[#e4e4e4]">Wolumen</div>
                <div class="pr-[6px] pb-[2px] h-full flex items-center justify-end border-r border-[#e4e4e4]">Cena</div>
                <div class="pr-[6px] pb-[2px] h-full flex items-center justify-end border-r border-[#e4e4e4]">S / L</div>
                <div class="pr-[6px] pb-[2px] h-full flex items-center justify-end border-r border-[#e4e4e4]">T / P</div>
                <div class="pr-[6px] pb-[2px] h-full flex items-center justify-end border-r border-[#e4e4e4]">Cena</div>
                <div class="pr-[6px] pb-[2px] h-full flex items-center justify-end border-r border-[#e4e4e4]">Swap</div>
                <div class="pr-[6px] pb-[2px] h-full flex items-center justify-end">Zysk</div>
            </div>
            <div class="h-[20px] bg-[#c4c4c4] flex items-center font-bold pl-[8px] pr-[4px] text-[12px] tracking-normal">
                <span class="w-[6px] h-[6px] rounded-full bg-[#8a8a8a] border border-[#aaa]"></span>
                <span class="ml-[8px] whitespace-pre">Saldo: 621.29 PLN  Kapitał: 621.29  Dostępny Depozyt: 621.29</span>
                <span class="ml-auto">0.00</span>
            </div>
            <div class="flex-1"></div>
        </div>
    </div>

    <!-- zakladki terminala -->
    <div class="h-[20px] -mt-[21px] ml-[16px] relative border-t-2 border-black flex items-center text-[#808080] text-[12px] bg-[#f0f0f0] w-[1900px]">
        <div class="ml-[2px] w-[59px] h-[20px] bg-white border-x border-b-2 border-black text-black flex items-center justify-center">Handel</div>
        <span class="ml-[9px] w-[51px]">Aktywa</span>
        <div class="w-px h-[12px] bg-[#999] mr-[8px]"></div>
        <span class="w-[51px]">Historia</span>
        <div class="w-px h-[12px] bg-[#999] mr-[9px]"></div>
        <span class="w-[63px]">Aktualności</span><span class="w-[21px] text-[11px] font-bold text-[#ff2020] pt-[7px]">99</span>
        <div class="w-px h-[12px] bg-[#999] mr-[9px]"></div>
        <span class="w-[37px]">Poczta</span><span class="w-[15px] text-[11px] font-bold text-[#ff2020] pt-[7px]">2</span>
        <div class="w-px h-[12px] bg-[#999] mr-[9px]"></div>
        <span class="w-[61px]">Kalendarz</span>
        <div class="w-px h-[12px] bg-[#999] mr-[9px]"></div>
        <span class="w-[40px]">Firma</span>
        <div class="w-px h-[12px] bg-[#999] mr-[9px]"></div>
        <span class="w-[47px]">Market</span>
        <div class="w-px h-[12px] bg-[#999] mr-[9px]"></div>
        <span class="w-[48px]">Alarmy</span>
        <div class="w-px h-[12px] bg-[#999] mr-[9px]"></div>
        <span class="w-[46px]">Artykuły</span><span class="w-[15px] text-[11px] font-bold text-[#ff2020] pt-[7px]">1</span>
        <div class="w-px h-[12px] bg-[#999] mr-[10px]"></div>
        <span class="w-[61px]">Biblioteka</span>
        <div class="w-px h-[12px] bg-[#999] mr-[9px]"></div>
        <span class="w-[30px]">VPS</span>
        <div class="w-px h-[12px] bg-[#999] mr-[9px]"></div>
        <span class="w-[53px]">Eksperci</span>
        <div class="w-px h-[12px] bg-[#999] mr-[9px]"></div>
        <span>Dziennik</span>
        <span class="ml-auto mr-[16px] text-[#222] tracking-[-0.2px]">Tester Strategii</span>
    </div>

    <!-- status -->
    <div class="mt-[6px] h-[23px] border-t-2 border-[#a8a8a8] flex items-center text-[12px]">
        <span class="ml-[2px] w-[1225px] text-[#111] tracking-[-0.1px]">Aby uzyskać pomoc, naciśnij klawisz F1</span>
        <div class="w-[128px] h-full border-l border-[#999] flex items-center pl-[5px]">Euro</div>
        <div class="w-[98px] h-full border-l border-[#999]"></div>
        <div class="w-[71px] h-full border-l border-[#999]"></div>
        <div class="w-[71px] h-full border-l border-[#999]"></div>
        <div class="w-[68px] h-full border-l border-[#999]"></div>
        <div class="w-[69px] h-full border-l border-[#999]"></div>
        <div class="w-[67px] h-full border-l border-[#999]"></div>
        <div class="flex-1 h-full border-l border-[#999] flex items-center pl-[4px]">
            <svg class="w-[16px] h-[14px]" viewBox="0 0 16 14"><path d="M1 11h2v3H1zM4 8h2v6H4zM7 6h2v8H7zM10 3h2v11h-2zM13 0h2v14h-2z" fill="#2ea81e"/></svg>
            <span class="ml-[5px]">13.11 ms</span>
        </div>
    </div>

    <script>
        // dane wykresu odczytane w pikselach: [high, gora korpusu, dol korpusu, low, biala]
        var c5 = [[270,274,284,290,0],[280,282,288,305,0],[275,281,287,297,0],[268,272,287,288,1],[210,226,242,243,1],[193,203,228,236,1],[195,202,215,218,0],[210,214,225,242,0],[212,217,223,230,1],[205,213,218,225,0],[208,212,233,237,0],[190,211,242,245,1],[140,148,208,215,1],[112,118,148,155,1],[97,118,120,128,1],[110,117,134,135,0],[108,115,133,134,1],[105,114,119,130,0],[105,105,137,155,0],[90,105,134,140,1],[98,101,104,125,0],[78,85,104,106,1],[80,85,90,100,0],[78,88,91,100,0],[80,87,107,112,0],[66,97,122,125,1],[52,55,98,102,1],[52,55,68,80,0],[62,67,80,86,0],[70,79,100,102,0],[88,94,100,113,0],[80,83,100,104,1],[17,48,57,62,0],[48,52,72,75,0],[55,66,72,78,0],[45,55,68,70,1],[50,55,60,68,0],[50,53,59,62,1],[50,53,55,70,1],[42,65,68,98,0],[62,64,90,104,0],[75,88,113,116,0],[102,112,122,143,0],[112,118,123,126,0],[115,118,130,135,0],[112,116,129,131,1],[85,100,122,123,0],[115,120,142,167,0],[130,142,161,162,0],[148,160,198,204,0],[165,170,196,197,1],[158,165,171,174,0],[158,161,167,175,1],[147,156,159,197,1],[148,156,165,170,0],[140,150,164,167,1],[100,118,148,160,1],[105,117,122,128,0],[112,120,128,132,0],[118,123,137,142,0],[145,148,183,188,0],[145,152,183,188,1],[127,140,153,155,1],[133,140,147,161,0],[145,147,152,155,0],[143,150,158,164,0],[143,145,157,158,1]];
        var c6 = [[500,585,600,640,0],[570,597,627,702,0],[585,598,626,660,1],[567,595,614,620,0],[575,598,614,618,1],[578,589,599,612,1],[558,568,590,608,1],[515,517,593,615,1],[380,397,518,530,1],[336,355,398,420,1],[318,328,355,384,1],[262,277,326,328,1],[186,190,277,290,1],[185,192,212,238,0],[50,145,221,222,1],[102,142,146,180,0],[123,141,153,172,0],[145,151,254,282,0],[216,232,254,273,1],[186,202,232,234,1],[185,202,218,228,0],[258,316,329,340,0],[276,316,328,372,1],[292,316,345,347,0],[300,310,344,354,1],[300,310,344,360,0],[315,343,344,360,1],[336,343,362,380,0],[327,349,397,425,1],[343,349,417,418,0],[397,406,415,440,1],[402,406,422,430,0],[400,410,421,425,1],[380,388,410,412,1],[366,376,389,392,1],[324,350,401,402,1],[344,349,359,402,0],[350,358,380,381,0],[366,377,380,384,0],[355,361,380,384,1],[360,361,368,372,0],[354,367,378,396,0],[352,358,378,380,0],[364,379,425,440,0],[400,412,422,428,1],[406,412,428,430,0],[406,412,427,436,1],[400,412,425,428,0],[396,398,425,426,1],[375,376,428,429,0],[330,331,428,450,1],[297,330,332,347,1],[300,327,329,347,1],[305,316,328,345,1],[288,313,317,318,0],[305,313,345,350,0],[274,298,320,360,1],[267,298,308,332,0],[298,304,320,325,0],[315,319,345,347,0]];
        var c7 = [[500,520,530,532,0],[515,525,531,534,1],[505,525,530,531,0],[484,502,521,530,1],[498,502,548,549,0],[518,522,548,563,1],[505,514,522,540,1],[480,490,512,514,1],[428,430,492,494,1],[405,408,431,435,1],[327,334,386,392,1],[235,241,334,362,1],[229,232,241,278,1],[220,234,235,260,1],[219,234,254,263,0],[247,252,285,300,0],[270,287,299,303,0],[270,306,320,335,0],[280,298,320,325,1],[282,298,305,315,0],[283,287,304,306,1],[282,287,304,309,0],[285,305,306,312,1],[270,278,304,305,1],[145,154,193,215,1],[150,152,153,207,1],[123,146,155,188,1],[123,145,156,170,0],[148,154,170,180,0],[158,168,173,188,0],[163,171,176,187,0],[148,154,167,187,0],[124,136,166,168,1],[120,136,149,155,0],[130,142,149,152,1],[140,142,166,170,0],[150,163,170,182,0],[108,115,163,165,1],[33,52,77,85,0],[68,72,76,80,0]];

        var fast = [];
        [[28,272],[70,272],[85,266],[150,257],[210,251],[260,241],[278,225],[300,205],[340,185],[380,162],[440,135],[480,130],[530,117],[570,100],[630,98],[700,85],[780,75],[840,68],[880,72],[960,80],[1010,92],[1060,112],[1120,135],[1170,148],[1210,150],[1280,146],[1408,146],[1425,0]].forEach(function (p) { fast.push([240 + p[0] / 2.613, 500 + p[1] / 3]); });
        [[145,748],[180,690],[225,625],[250,565],[270,510],[300,455],[340,375],[365,290],[400,230],[435,185],[465,175],[500,185],[560,185],[605,205],[635,232],[680,240],[740,270],[770,305],[830,325],[890,365],[960,375],[1030,380],[1110,383],[1160,388],[1250,394],[1300,384],[1380,375]].forEach(function (p) { fast.push([760 + p[0] / 3, 170 + p[1] / 3]); });
        [[0,543],[60,525],[120,523],[190,523],[225,497],[260,475],[300,425],[370,365],[440,300],[490,290],[500,270],[560,255],[600,240],[650,200],[720,165],[778,142]].forEach(function (p) { fast.push([1240 + p[0] / 2.306, 110 + p[1] / 3]); });

        var slow = [];
        [[28,280],[110,278],[160,270],[200,255],[260,245],[280,228],[310,210],[380,177],[440,160],[500,130],[550,118],[590,108],[680,107],[780,100],[840,92],[870,92],[900,100],[950,112],[1000,115],[1030,130],[1055,152],[1120,153],[1170,153],[1240,147],[1280,149],[1408,146],[1490,0]].forEach(function (p) { slow.push([240 + p[0] / 2.613, 500 + p[1] / 3]); });
        [[280,748],[320,650],[355,560],[390,460],[430,410],[480,340],[530,280],[575,245],[610,238],[680,240],[730,262],[760,285],[780,310],[870,343],[1030,346],[1090,352],[1160,377],[1250,384],[1300,382],[1380,358]].forEach(function (p) { slow.push([760 + p[0] / 3, 170 + p[1] / 3]); });
        [[0,524],[60,522],[100,510],[190,510],[225,497],[245,440],[270,380],[295,310],[320,287],[360,290],[440,293],[490,290],[520,250],[550,212],[590,197],[630,187],[650,175],[710,172],[745,158],[778,142]].forEach(function (p) { slow.push([1240 + p[0] / 2.306, 110 + p[1] / 3]); });

        // wskaznik AC: koniec slupka (y) i kolor, k = 1..166
        var ac = [525,'r',533,'r',537,'r',520,'g',488,'g',462,'g',456,'g',456,'r',477,'r',500,'r',513,'r',501,'g',474,'g',450,'g',435,'g',428,'g',444,'r',474,'r',501,'r',507,'r',503,'g',495,'g',484,'g',487,'r',492,'r',495,'r',495,'g',495,'r',495,'r',503,'r',513,'r',505,'g',503,'g',501,'g',491,'g',486,'g',504,'r',507,'r',510,'r',521,'r',525,'r',541,'r',545,'r',549,'r',543,'g',525,'g',513,'g',507,'g',513,'r',522,'r',528,'r',522,'g',513,'g',491,'g',471,'g',456,'g',444,'g',441,'g',444,'r',462,'r',484,'g',498,'g',501,'r',501,'g',484,'g',468,'g',300,'g',191,'g',120,'g',75,'g',72,'g',267,'r',390,'r',468,'r',484,'g',438,'g',402,'g',366,'g',336,'g',348,'r',369,'r',399,'r',441,'r',510,'r',573,'r',627,'r',654,'r',690,'r',696,'r',681,'g',684,'r',687,'g',663,'g',642,'g',636,'g',630,'g',642,'r',648,'r',642,'g',627,'g',576,'g',528,'g',498,'g',478,'g',480,'r',495,'r',503,'r',510,'r',510,'g',510,'g',513,'r',516,'r',513,'g',504,'g',484,'g',460,'g',444,'g',414,'g',402,'g',393,'g',387,'g',405,'g',435,'r',453,'r',468,'r',488,'r',491,'r',501,'r',513,'r',513,'g',513,'g',513,'g',507,'g',498,'g',477,'g',447,'g',402,'g',360,'g',327,'g',321,'g',339,'r',384,'r',444,'r',507,'r',549,'r',570,'r',564,'g',549,'g',537,'g',522,'g',484,'g',453,'g',426,'g',408,'g',408,'r',453,'r',492,'r',519,'r',531,'r',525,'g',516,'g',516,'g',522,'r',525,'r',507,'g',498,'g'];

        var prices = ['354.00','346.40','338.80','331.20','323.60','316.00','308.40','300.80','293.20','285.60','278.00','270.40','262.80','255.20','247.60'];
        var times = ['10 Oct 2019','11 Oct 19:00','14 Oct 20:00','15 Oct 21:00','17 Oct 15:00','18 Oct 16:00','21 Oct 17:00','22 Oct 18:00','23 Oct 19:00','24 Oct 20:00','25 Oct 21:00','29 Oct 14:00','30 Oct 15:00','31 Oct 16:00','1 Nov 17:00','4 Nov 19:00','5 Nov 20:00','6 Nov 21:00','8 Nov 15:00','11 Nov 16:00','12 Nov 17:00'];

        function line(x1, y1, x2, y2, color, extra) {
            return '<line x1="' + x1 + '" y1="' + y1 + '" x2="' + x2 + '" y2="' + y2 + '" stroke="' + color + '" ' + (extra || '') + '/>';
        }
        function label(x, y, t, extra) {
            return '<text x="' + x + '" y="' + y + '" font-size="10.5" letter-spacing="-0.35" fill="#000" shape-rendering="auto" ' + (extra || '') + '>' + t + '</text>';
        }
        function px(v) { return Math.round(v) + 0.5; }
        function pts(a) { return a.map(function (p) { return p[0].toFixed(1) + ',' + p[1].toFixed(1); }).join(' '); }

        var dash = 'stroke-dasharray="4 3"';
        var s = '';

        // siatka
        for (var x = 282.5; x < 1871; x += 32) {
            s += line(x, 110, x, 610, '#c0c0c0', dash);
            s += line(x, 613, x, 863, '#c0c0c0', dash);
        }
        for (var y = 130.5; y < 610; y += 32) {
            s += line(251, y, 1871, y, '#c0c0c0', dash);
        }
        s += line(251, 771.5, 1871, 771.5, '#c0c0c0', 'stroke-dasharray="3 2"');
        s += line(251, 134.5, 1871, 134.5, '#c0c0c0');

        // swiece
        function candle(k, d, y0) {
            var cx = 250.5 + 8 * k;
            var hi = px(y0 + d[0] / 3), top = px(y0 + d[1] / 3), bot = px(y0 + d[2] / 3), lo = px(y0 + d[3] / 3);
            s += line(cx, hi, cx, lo, '#000');
            if (bot - top < 2) {
                s += line(cx - 2, top, cx + 3, top, '#000');
            } else {
                s += '<rect x="' + (cx - 2) + '" y="' + top + '" width="4" height="' + (bot - top) + '" fill="' + (d[4] ? '#fff' : '#000') + '" stroke="#000"/>';
            }
        }
        c5.forEach(function (d, i) { candle(i, d, 500); });
        c6.forEach(function (d, i) { candle(i + 67, d, 170); });
        c7.forEach(function (d, i) { candle(i + 127, d, 110); });

        // srednie kroczace
        s += '<polyline points="' + pts(fast) + '" fill="none" stroke="#ff0000"/>';
        s += '<polyline points="' + pts(slow) + '" fill="none" stroke="#ff0000"/>';

        // AC
        for (var k = 1; k <= 166; k++) {
            var endY = 610 + ac[(k - 1) * 2] / 3;
            if (Math.abs(endY - 771.3) < 1) continue;
            var col = ac[(k - 1) * 2 + 1] == 'r' ? '#ff0000' : '#008000';
            s += line(250.5 + 8 * k, 771.5, 250.5 + 8 * k, px(endY), col);
        }

        // ramki
        s += '<rect x="250" y="108" width="1670" height="1" fill="#f0f0f0"/>';
        s += '<rect x="250" y="109" width="1" height="755" fill="#000"/>';
        s += '<rect x="250" y="109" width="1621" height="1" fill="#000"/>';
        s += '<rect x="250" y="610" width="1621" height="1" fill="#000"/>';
        s += '<rect x="250" y="611" width="1621" height="1" fill="#fff"/>';
        s += '<rect x="250" y="612" width="1621" height="1" fill="#000"/>';
        s += '<rect x="250" y="863" width="1621" height="1" fill="#000"/>';
        s += '<rect x="1870" y="109" width="1" height="755" fill="#000"/>';
        s += '<rect x="1871" y="109" width="49" height="777" fill="#fff"/>';

        // osie
        prices.forEach(function (p, i) {
            var yy = 130.5 + 32 * i;
            s += line(1871, yy, 1875, yy, '#000');
            s += label(1877, yy + 3, p);
        });
        s += '<rect x="1873" y="127" width="45" height="13" fill="#c0c0c0"/>';
        s += label(1877, 138, '353.17', 'style="fill:#fff"');
        s += line(1871, 134.5, 1875, 134.5, '#000');
        s += '<path d="M1574 110h9l-4.500 5z" fill="#a8a8a8" shape-rendering="auto"/>';
        s += label(1876, 621, '17.2213');
        s += label(1876, 775, '0.0000');
        s += label(1875, 861, '-9.9009');
        s += line(1871, 771.5, 1875, 771.5, '#000');
        s += label(254, 624, 'AC -0.3840');
        times.forEach(function (t, i) {
            s += label(250 + 64 * i, 876, t);
            if (i > 0) s += line(250.5 + 64 * i, 864, 250.5 + 64 * i, 868, '#000');
        });
        document.getElementById('chart').innerHTML = s;
    </script>
</body>
</html>
